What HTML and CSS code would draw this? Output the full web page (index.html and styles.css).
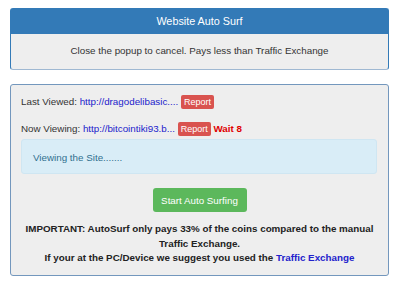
FILE: index.html
```html
<!DOCTYPE html>
<html lang="en">
<head>
    <meta charset="UTF-8">
    <title>Website Auto Surf</title>
    <link rel="stylesheet" href="styles.css">
</head>
<body>

<div class="panel panel-top">
    <div class="panel-heading">Website Auto Surf</div>
    <div class="panel-body center">Close the popup to cancel. Pays less than Traffic Exchange</div>
</div>

<div class="panel panel-surf">
    <div class="row">
        Last Viewed: <a href="#">http://dragodelibasic....</a>
        <span class="label">Report</span>
    </div>
    <div class="row">
        Now Viewing: <a href="#">http://bitcointiki93.b...</a>
        <span class="label">Report</span>
        <span class="wait">Wait 8</span>
    </div>
    <div class="alert">Viewing the Site.......</div>
    <div class="center">
        <button class="btn">Start Auto Surfing</button>
    </div>
    <p class="notice">
        IMPORTANT: AutoSurf only pays 33% of the coins compared to the manual Traffic Exchange.<br>
        If your at the PC/Device we suggest you used the <a href="#">Traffic Exchange</a>
    </p>
</div>

</body>
</html>
```

FILE: styles.css
```css
* {
    box-sizing: border-box;
}
body {
    margin: 0;
    padding: 8px 11px 0 10px;
    font-family: "Liberation Sans", Arial, sans-serif;
    font-size: 9.8px;
    color: #333;
    background-color: #fff;
}
a {
    color: #2222cc;
    text-decoration: none;
}
.center {
    text-align: center;
}
.panel {
    background-color: #eeeeee;
    border: 1px solid #7397bd;
    border-radius: 3px;
}
.panel-top {
    border-color: #337ab7;
    border-bottom-color: #9fb8d2;
}
.panel-heading {
    height: 25px;
    line-height: 25px;
    background-color: #337ab7;
    color: #fff;
    font-size: 10.8px;
    text-align: center;
}
.panel-top .panel-body {
    height: 35px;
    line-height: 34px;
}
.panel-surf {
    margin-top: 14px;
    padding: 10px 10px 9px 10px;
}
.row {
    height: 14px;
    line-height: 14px;
    margin-bottom: 13px;
}
.row + .row {
    margin-bottom: 3px;
}
.label {
    display: inline-block;
    padding: 0 3px;
    height: 14px;
    line-height: 14px;
    background-color: #d9534f;
    color: #fff;
    border-radius: 2px;
    font-size: 9px;
}
.wait {
    color: #e00000;
    font-weight: bold;
}
.alert {
    height: 35px;
    line-height: 35px;
    padding: 0 11px;
    margin-right: 1px;
    background-color: #d9edf7;
    border: 1px solid #cfe6f2;
    border-radius: 3px;
    color: #31708f;
}
.btn {
    margin-top: 14px;
    width: 94px;
    height: 24px;
    padding: 0;
    white-space: nowrap;
    background-color: #5cb85c;
    color: #fff;
    border: none;
    border-radius: 3px;
    font-family: inherit;
    font-size: 9.8px;
}
.notice {
    margin: 10px 0 0 0;
    text-align: center;
    font-weight: bold;
    line-height: 14.5px;
    color: #222;
}
```
